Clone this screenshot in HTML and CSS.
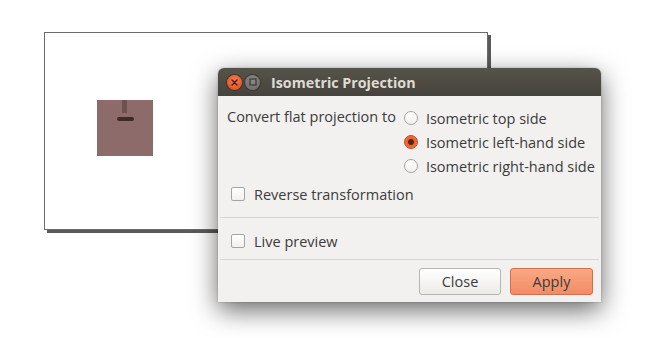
FILE: index.html
```html
<!DOCTYPE html>
<html lang="en">
<head>
    <meta charset="UTF-8">
    <title>Isometric Projection</title>
    <link rel="stylesheet" href="styles.css">
</head>
<body>
    <div class="desktop">
        <!-- Drawing canvas behind the dialog -->
        <div class="canvas-page">
            <div class="shape">
                <span class="shape-stem"></span>
                <span class="shape-bar"></span>
            </div>
        </div>

        <!-- Dialog -->
        <div class="dialog">
            <div class="titlebar">
                <span class="win-btn win-close">
                    <svg width="7" height="7" viewBox="0 0 7 7"><path d="M1 1L6 6M6 1L1 6" stroke="#4a1a0a" stroke-width="1.4" stroke-linecap="round"/></svg>
                </span>
                <span class="win-btn win-max">
                    <svg width="8" height="8" viewBox="0 0 8 8"><rect x="1" y="1" width="6" height="6" fill="none" stroke="#3a3935" stroke-width="1.2"/></svg>
                </span>
                <span class="title">Isometric Projection</span>
            </div>

            <div class="section section-options">
                <div class="convert-row">
                    <div class="convert-label">Convert flat projection to</div>
                    <div class="radio-list">
                        <label class="choice"><span class="radio"></span>Isometric top side</label>
                        <label class="choice"><span class="radio checked"></span>Isometric left-hand side</label>
                        <label class="choice"><span class="radio"></span>Isometric right-hand side</label>
                    </div>
                </div>
                <label class="choice check-row"><span class="checkbox"></span>Reverse transformation</label>
            </div>

            <div class="section section-preview">
                <label class="choice check-row"><span class="checkbox"></span>Live preview</label>
            </div>

            <div class="section section-buttons">
                <button class="btn">Close</button>
                <button class="btn btn-apply">Apply</button>
            </div>
        </div>
    </div>
</body>
</html>
```

FILE: styles.css
```css
* {
    margin: 0;
    padding: 0;
    box-sizing: border-box;
}

body {
    background: #ffffff;
    font-family: 'Open Sans', 'Liberation Sans', sans-serif;
    font-size: 14.5px;
    color: #3c3c3c;
}

.desktop {
    position: relative;
    width: 657px;
    height: 338px;
    overflow: hidden;
}

/* background drawing */
.canvas-page {
    position: absolute;
    left: 44px;
    top: 32px;
    width: 444px;
    height: 198px;
    background: #ffffff;
    border: 1.5px solid #6b6b6b;
    box-shadow: 3px 3px 0 #5a5a5a;
}

.shape {
    position: absolute;
    left: 52px;
    top: 67px;
    width: 56px;
    height: 56px;
    background: #8d6b6a;
}

.shape-stem {
    position: absolute;
    left: 25px;
    top: 0;
    width: 5px;
    height: 13px;
    background: #6e5150;
}

.shape-bar {
    position: absolute;
    left: 20px;
    top: 17px;
    width: 17px;
    height: 4px;
    border-radius: 2px;
    background: #3f2a2a;
}

/* dialog */
.dialog {
    position: absolute;
    left: 218px;
    top: 68px;
    width: 383px;
    height: 234px;
    background: #f2f1f0;
    border-radius: 6px 6px 0 0;
    box-shadow: 0 8px 26px rgba(0,0,0,0.6), 0 0 2px rgba(0,0,0,0.3);
    display: flex;
    flex-direction: column;
}

.titlebar {
    height: 28px;
    background: linear-gradient(#56534b, #45433d);
    border-radius: 6px 6px 0 0;
    display: flex;
    align-items: center;
    padding-left: 9px;
}

.win-btn {
    width: 15px;
    height: 15px;
    border-radius: 50%;
    display: flex;
    align-items: center;
    justify-content: center;
}

.win-close {
    background: radial-gradient(circle at 50% 35%, #f57b4e, #df4a17);
    box-shadow: 0 0 0 1px #3a3834;
}

.win-max {
    margin-left: 3px;
    background: radial-gradient(circle at 50% 35%, #8b8983, #6a6863);
    box-shadow: 0 0 0 1px #3a3834;
}

.title {
    margin-left: 11px;
    font-weight: bold;
    font-size: 14.3px;
    color: #dfdbd2;
}

.section {
    border-bottom: 1px solid #d9d6d2;
    margin: 0 2px;
}

.section-options {
    height: 122px;
    padding: 10px 0 0 7px;
}

.convert-row {
    display: flex;
    gap: 8px;
}

.convert-label {
    height: 24px;
    line-height: 22px;
}

.radio-list {
    display: flex;
    flex-direction: column;
}

.choice {
    height: 24px;
    display: flex;
    align-items: center;
    gap: 8px;
}

.radio {
    width: 14px;
    height: 14px;
    border-radius: 50%;
    border: 1px solid #a8a49f;
    background: linear-gradient(#ffffff, #f1f0ee);
}

.radio.checked {
    border-color: #c4481d;
    background: radial-gradient(circle, #5b2314 0, #5b2314 2.5px, #e8612f 3.5px, #f27c4e 100%);
}

.check-row {
    margin-top: 4px;
    padding-left: 4px;
    gap: 9px;
}

.checkbox {
    width: 14px;
    height: 14px;
    border-radius: 2px;
    border: 1px solid #a8a49f;
    background: linear-gradient(#ffffff, #f1f0ee);
}

.section-preview {
    height: 42px;
    padding: 7px 0 0 7px;
}

.section-buttons {
    flex: 1;
    border-bottom: none;
    display: flex;
    justify-content: flex-end;
    align-items: center;
    gap: 9px;
    padding-right: 6px;
}

.btn {
    width: 82px;
    height: 27px;
    border: 1px solid #b8b4ae;
    border-radius: 3px;
    background: linear-gradient(#ffffff, #ecebe9);
    font-family: inherit;
    font-size: 14.5px;
    color: #3c3c3c;
}

.btn-apply {
    width: 83px;
    border-color: #d2704b;
    background: linear-gradient(#f9a985, #f28b63);
}
```
